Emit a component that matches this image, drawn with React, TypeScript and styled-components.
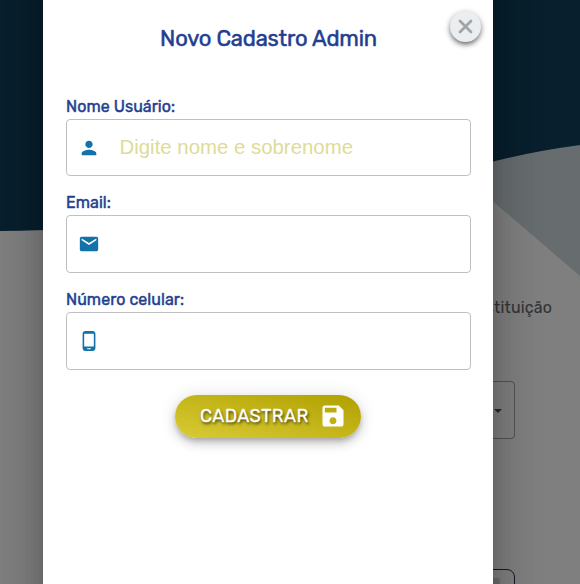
import React from "react";
import styled, { createGlobalStyle } from "styled-components";

const GlobalStyle = createGlobalStyle`
  * { box-sizing: border-box; }
  body { margin: 0; overflow: hidden; font-family: Rubik, Roboto, sans-serif; }
`;

const Page = styled.div`
  position: relative;
  width: 580px;
  height: 584px;
  overflow: hidden;
  background: #fff;
`;

const Waves = styled.svg`
  position: absolute;
  inset: 0;
`;

const PageContent = styled.main`
  position: relative;
  display: flex;
  flex-direction: column;
  align-items: flex-end;
  padding: 296px 65px 0 66px;
`;

const PageLabel = styled.p`
  margin: 0 -37px 0 0;
  font-size: 16px;
  line-height: 24px;
  letter-spacing: 0.15px;
  color: #62676c;
`;

const SelectBox = styled.div`
  display: flex;
  align-items: center;
  justify-content: flex-end;
  width: 100%;
  height: 58px;
  margin-top: 61px;
  padding-right: 12px;
  border: 1px solid #a5a5a5;
  border-radius: 4px;
`;

const SelectArrow = styled.span`
  margin-top: 2px;
  border: 4.5px solid transparent;
  border-top-color: #555;
  border-bottom: 0;
`;

const PageField = styled.div`
  display: flex;
  justify-content: flex-end;
  width: 100%;
  height: 60px;
  margin-top: 130px;
  padding: 8px 14px;
  border: 1px solid #30304a;
  border-radius: 8px;
`;

const FieldChip = styled.span`
  width: 30px;
  height: 30px;
  border-radius: 3px;
  background: #d8d8d8;
`;

const Overlay = styled.div`
  position: absolute;
  inset: 0;
  display: flex;
  justify-content: center;
  padding-right: 44px;
  background: rgba(0, 0, 0, 0.5);
`;

const Dialog = styled.section`
  position: relative;
  flex: none;
  width: 450px;
  height: 800px;
  margin: -100px 0 0;
  padding: 122px 22px 0 23px;
  background: #fff;
  box-shadow:
    0 11px 15px -7px rgba(0, 0, 0, 0.2),
    0 24px 38px 3px rgba(0, 0, 0, 0.14),
    0 9px 46px 8px rgba(0, 0, 0, 0.12);
`;

const CloseButton = styled.button`
  position: absolute;
  top: 111px;
  right: 12px;
  display: grid;
  place-items: center;
  width: 31px;
  height: 31px;
  padding: 0;
  border: 0;
  border-radius: 50%;
  background: #eaeef0;
  box-shadow:
    0 3px 5px -1px rgba(0, 0, 0, 0.45),
    0 2px 6px rgba(0, 0, 0, 0.3);
`;

const Title = styled.h1`
  margin: 0;
  font-size: 22px;
  font-weight: 400;
  line-height: 33px;
  letter-spacing: -0.2px;
  -webkit-text-stroke: 0.5px #233e90;
  text-align: center;
  color: #233e90;
`;

const Form = styled.form`
  display: flex;
  flex-direction: column;
  padding-top: 42px;
`;

const Field = styled.div<{ $height: number; $gap: number }>`
  display: flex;
  flex-direction: column;
  height: ${(p) => p.$height + 22}px;
  margin-bottom: ${(p) => p.$gap}px;
`;

const Label = styled.label`
  font-size: 16px;
  font-weight: 400;
  line-height: 20px;
  height: 22px;
  letter-spacing: 0.06px;
  -webkit-text-stroke: 0.45px #233e90;
  color: #233e90;
`;

const InputFrame = styled.div`
  display: flex;
  flex: 1;
  align-items: center;
  gap: 19.5px;
  padding: 0 12px 0 11px;
  border: 1px solid #c0c0c0;
  border-radius: 4px;
`;

const Input = styled.input`
  flex: 1;
  min-width: 0;
  height: 26px;
  padding: 0;
  border: 0;
  outline: 0;
  background: transparent;
  font: 20.4px "Liberation Sans", Arial, sans-serif;
  &::placeholder { color: #dfdb98; opacity: 1; }
`;

const SubmitButton = styled.button`
  display: flex;
  align-self: center;
  align-items: center;
  gap: 10px;
  width: 186px;
  height: 43px;
  margin: 5px 0 0 -1px;
  padding: 0 14px 1px 25px;
  border: 0;
  border-radius: 22px;
  background: linear-gradient(to top right, #d9cb35, #b0a000);
  box-shadow:
    0 3px 5px -1px rgba(0, 0, 0, 0.2),
    0 6px 10px rgba(0, 0, 0, 0.14),
    0 1px 18px rgba(0, 0, 0, 0.12);
  font: 400 18px Rubik, Roboto, sans-serif;
  letter-spacing: 0.4px;
  -webkit-text-stroke: 0.3px #fff;
  color: #fff;
  text-shadow: 1px 2px 3px rgba(0, 0, 0, 0.7);
`;

const ButtonText = styled.span`
  width: 109px;
  text-align: left;
  white-space: nowrap;
`;

const Glyph = styled.svg`
  flex: none;
`;

const paths = {
  person:
    "M12 12c2.21 0 4-1.79 4-4s-1.79-4-4-4-4 1.79-4 4 1.79 4 4 4zm0 2c-2.67 0-8 1.34-8 4v2h16v-2c0-2.66-5.33-4-8-4z",
  email:
    "M20 4H4c-1.1 0-1.99.9-1.99 2L2 18c0 1.1.9 2 2 2h16c1.1 0 2-.9 2-2V6c0-1.1-.9-2-2-2zm0 4l-8 5-8-5V6l8 5 8-5v2z",
  phone:
    "M16 1H8C6.34 1 5 2.34 5 4v16c0 1.66 1.34 3 3 3h8c1.66 0 3-1.34 3-3V4c0-1.66-1.34-3-3-3zm-2 20h-4v-1h4v1zm3.25-3H6.75V4h10.5v14z",
  save: "M17 3H5c-1.11 0-2 .9-2 2v14c0 1.1.89 2 2 2h14c1.1 0 2-.9 2-2V7l-4-4zm-5 16c-1.66 0-3-1.34-3-3s1.34-3 3-3 3 1.34 3 3-1.34 3-3 3zm3-10H5V5h10v4z",
};

function Icon({ name, size, color }: { name: keyof typeof paths; size: number; color: string }) {
  return (
    <Glyph width={size} height={size} viewBox="0 0 24 24" fill={color} aria-hidden="true">
      <path d={paths[name]} />
    </Glyph>
  );
}

const fields: {
  id: string;
  label: string;
  icon: keyof typeof paths;
  placeholder?: string;
  height: number;
  gap: number;
}[] = [
  { id: "name", label: "Nome Usuário:", icon: "person", placeholder: "Digite nome e sobrenome", height: 57, gap: 17 },
  { id: "email", label: "Email:", icon: "email", height: 58, gap: 17 },
  { id: "phone", label: "Número celular:", icon: "phone", height: 58, gap: 20 },
];

export default function App() {
  return (
    <>
      <GlobalStyle />
      <Page>
        <Waves width="580" height="584" viewBox="0 0 580 584" aria-hidden="true">
          <path d="M420 139L580 276V100H420Z" fill="#ced9df" />
          <path d="M0 0H580V145Q535 151 493 161.500C350 200 230 228 0 231Z" fill="#103f5b" />
        </Waves>
        <PageContent>
          <PageLabel>Instituição</PageLabel>
          <SelectBox>
            <SelectArrow />
          </SelectBox>
          <PageField>
            <FieldChip />
          </PageField>
        </PageContent>
        <Overlay>
          <Dialog role="dialog" aria-labelledby="dialog-title">
            <CloseButton type="button" aria-label="Fechar">
              <svg width="15" height="15" viewBox="0 0 15 15">
                <path d="M2 2L13 13M13 2L2 13" stroke="#a3a5a4" strokeWidth="2.800" strokeLinecap="round" />
              </svg>
            </CloseButton>
            <Title id="dialog-title">Novo Cadastro Admin</Title>
            <Form>
              {fields.map((f) => (
                <Field key={f.id} $height={f.height} $gap={f.gap}>
                  <Label htmlFor={f.id}>{f.label}</Label>
                  <InputFrame>
                    <Icon name={f.icon} size={22} color="#1272a9" />
                    <Input id={f.id} placeholder={f.placeholder} />
                  </InputFrame>
                </Field>
              ))}
              <SubmitButton type="button">
                <ButtonText>CADASTRAR</ButtonText>
                <Icon name="save" size={28} color="#fff" />
              </SubmitButton>
            </Form>
          </Dialog>
        </Overlay>
      </Page>
    </>
  );
}
